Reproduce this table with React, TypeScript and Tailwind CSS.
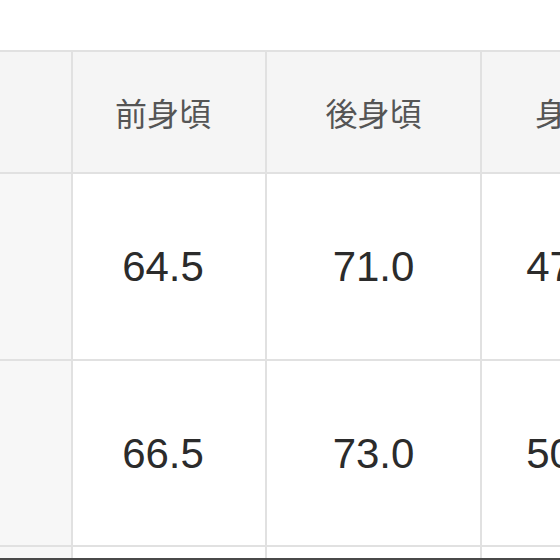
const headers = ["", "前身頃", "後身頃", "身幅", "肩幅"];
const rows = [
  ["M", "64.5", "71.0", "47.0", "42.0"],
  ["L", "66.5", "73.0", "50.0", "44.0"],
];

const cols = "grid grid-cols-[71px_192px_213px_170px_200px] gap-[2px]";

export default function App() {
  return (
    <div className="w-[560px] h-[560px] overflow-hidden bg-white flex flex-col">
      <div className="h-[50px] shrink-0 bg-white" />
      <div className="w-[860px] bg-[#e1e1e1] pt-[2px] flex flex-col gap-[2px]">
        {/* Header */}
        <div className={cols}>
          {headers.map((h, i) => (
            <div
              key={i}
              className={`h-[120px] flex items-center justify-center bg-[#f5f5f5] text-[#555555] text-[32px] ${i === 1 ? "pr-3" : ""}`}
              style={{ fontFamily: '"Noto Sans CJK JP", "Noto Sans", sans-serif' }}
            >
              {h}
            </div>
          ))}
        </div>

        {/* Body */}
        {rows.map((r, ri) => (
          <div key={ri} className={cols}>
            {r.map((v, i) => (
              <div
                key={i}
                className={`${ri === 0 ? "h-[185px]" : "h-[184px]"} flex items-center justify-center text-[42px] text-[#2b2b2b] ${
                  i === 0 ? "bg-[#f7f7f7] text-transparent" : "bg-white"
                } ${i === 1 ? "pr-3" : ""}`}
                style={{ fontFamily: '"Liberation Sans", Arial, sans-serif' }}
              >
                {v}
              </div>
            ))}
          </div>
        ))}

        <div className={cols}>
          {headers.map((_, i) => (
            <div key={i} className={`h-[11px] ${i === 0 ? "bg-[#f7f7f7]" : "bg-white"}`} />
          ))}
        </div>
      </div>
      <div className="h-[10px] bg-[#4a4a4a]" />
    </div>
  );
}
